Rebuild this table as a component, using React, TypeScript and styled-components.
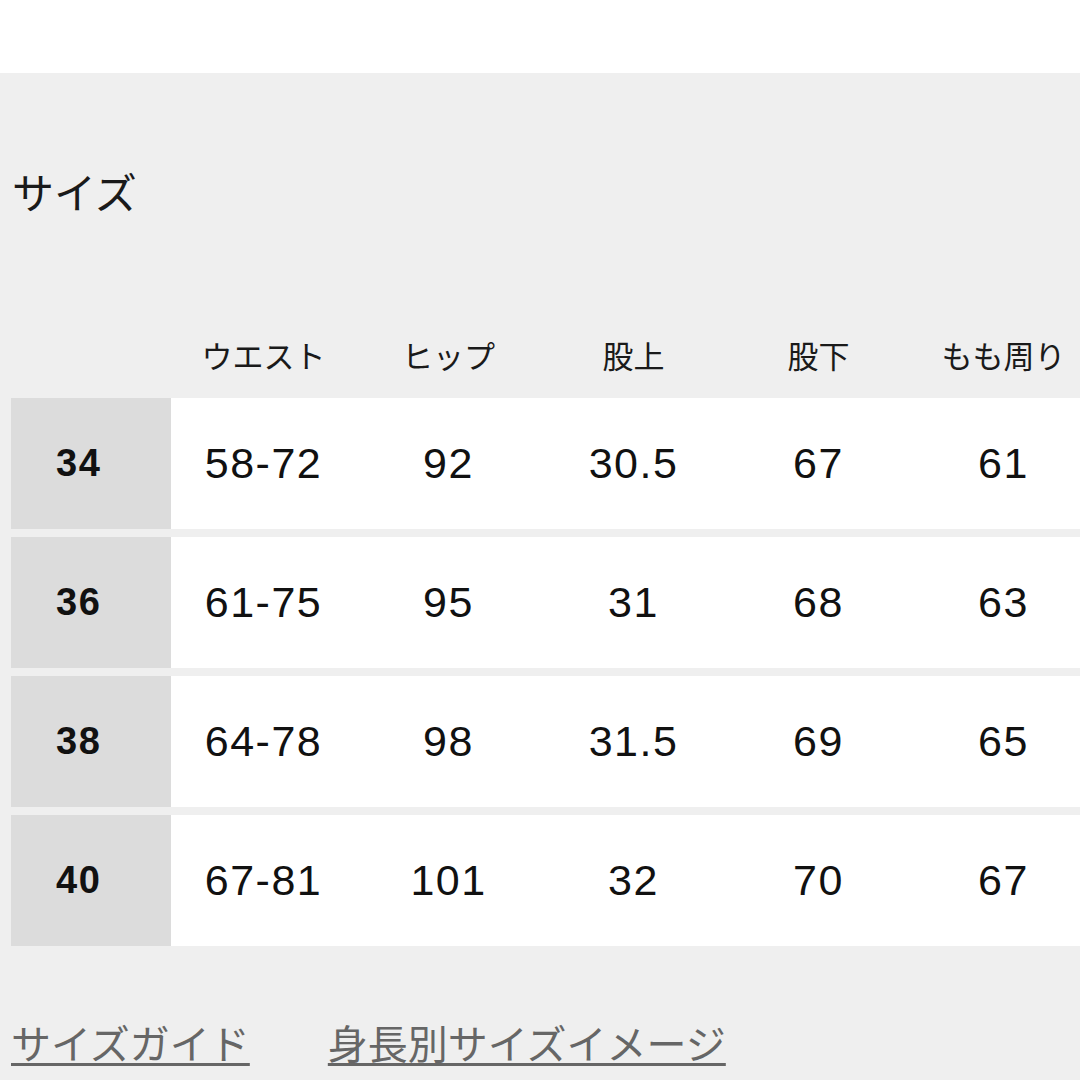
import styled, { createGlobalStyle } from "styled-components";

const GlobalStyle = createGlobalStyle`
  html, body {
    margin: 0;
    padding: 0;
    background: #efefef;
  }
  body {
    font-family: "Liberation Sans", "Noto Sans CJK JP", sans-serif;
    color: #1a1a1a;
    overflow: hidden;
  }
`;

const TopBar = styled.div`
  height: 73px;
  background: #ffffff;
`;

const Section = styled.section`
  background: #efefef;
  padding: 97px 0 40px 11px;
  min-height: 1007px;
  box-sizing: border-box;
`;

const Title = styled.h2`
  margin: 0 0 128px 1px;
  font-family: "Noto Sans CJK JP", sans-serif;
  font-weight: 400;
  font-size: 42px;
  line-height: 42px;
  color: #1a1a1a;
`;

const COLUMNS = "160px repeat(5, 185px)";

const HeaderRow = styled.div`
  display: grid;
  grid-template-columns: ${COLUMNS};
  height: 30px;
  margin-bottom: 28px;
`;

const HeaderCell = styled.div`
  text-align: center;
  font-family: "Noto Sans CJK JP", sans-serif;
  font-size: 31px;
  line-height: 30px;
  color: #1a1a1a;
  white-space: nowrap;
`;

const Table = styled.div`
  display: flex;
  flex-direction: column;
  gap: 8px;
`;

const Row = styled.div`
  display: grid;
  grid-template-columns: ${COLUMNS};
  height: 131px;
  background: #ffffff;
`;

const SizeCell = styled.div`
  display: flex;
  align-items: center;
  padding-left: 45px;
  background: #dcdcdc;
  font-weight: 700;
  font-size: 38px;
  letter-spacing: 1.5px;
  color: #111;
`;

const ValueCell = styled.div`
  display: flex;
  align-items: center;
  justify-content: center;
  font-size: 43px;
  letter-spacing: 1.5px;
  color: #111;
  white-space: nowrap;
`;

const Links = styled.div`
  display: flex;
  gap: 78px;
  margin-top: 74px;
`;

const GuideLink = styled.a`
  font-family: "Noto Sans CJK JP", sans-serif;
  font-size: 40px;
  line-height: 44px;
  color: #666666;
  text-decoration: underline;
  text-decoration-thickness: 3px;
  text-underline-offset: 4px;
  cursor: pointer;
`;

const headers = ["ウエスト", "ヒップ", "股上", "股下", "もも周り"];

const rows = [
  { size: "34", values: ["58-72", "92", "30.5", "67", "61"] },
  { size: "36", values: ["61-75", "95", "31", "68", "63"] },
  { size: "38", values: ["64-78", "98", "31.5", "69", "65"] },
  { size: "40", values: ["67-81", "101", "32", "70", "67"] },
];

const App = () => {
  return (
    <>
      <GlobalStyle />
      <TopBar />
      <Section>
        <Title>サイズ</Title>
        <HeaderRow>
          <div />
          {headers.map((h) => (
            <HeaderCell key={h}>{h}</HeaderCell>
          ))}
        </HeaderRow>
        <Table>
          {rows.map((row) => (
            <Row key={row.size}>
              <SizeCell>{row.size}</SizeCell>
              {row.values.map((v, i) => (
                <ValueCell key={i}>{v}</ValueCell>
              ))}
            </Row>
          ))}
        </Table>
        <Links>
          <GuideLink>サイズガイド</GuideLink>
          <GuideLink>身長別サイズイメージ</GuideLink>
        </Links>
      </Section>
    </>
  );
};

export default App;
